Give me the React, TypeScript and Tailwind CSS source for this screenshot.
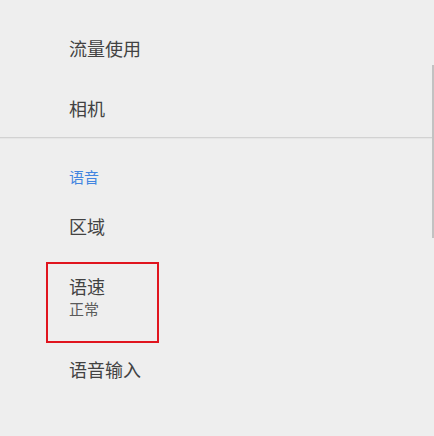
import React from "react";

const font = { fontFamily: '"Noto Sans CJK SC", "Noto Sans", sans-serif' };

function Row({ label, h }: { label: string; h: string }) {
  return (
    <div className={`flex items-center pl-[69px] ${h}`}>
      <span className="text-[18px] leading-[22px] text-[#424242]">{label}</span>
    </div>
  );
}

export default function App() {
  return (
    <div
      className="relative w-[434px] h-[436px] overflow-hidden bg-[#eeeeee]"
      style={font}
    >
      <div className="flex flex-col">
        <div className="h-[18px]" />
        <Row label="流量使用" h="h-[60px]" />
        <Row label="相机" h="h-[59px]" />
        <div className="h-[1px] bg-[#d2d2d2]" />
        <div className="h-[1px] bg-[#e6e6e6]" />
        <div className="h-[57px] pt-[29px] pl-[69px]">
          <span className="block text-[15px] leading-[18px] text-[#4285e0]">语音</span>
        </div>
        <Row label="区域" h="h-[60px]" />
        <div className="relative h-[84px] pl-[69px] pt-[19px] flex flex-col">
          <span className="text-[18px] leading-[22px] text-[#424242]">语速</span>
          <span className="mt-[2px] text-[15px] leading-[20px] text-[#5a5a5a]">正常</span>
          <div className="absolute left-[46px] top-[6px] w-[113px] h-[81px] border-2 border-[#e0141e]" />
        </div>
        <Row label="语音输入" h="h-[58px]" />
      </div>
      <div className="absolute right-0 top-[65px] w-[2px] h-[173px] bg-[#c2c2c2]" />
    </div>
  );
}
